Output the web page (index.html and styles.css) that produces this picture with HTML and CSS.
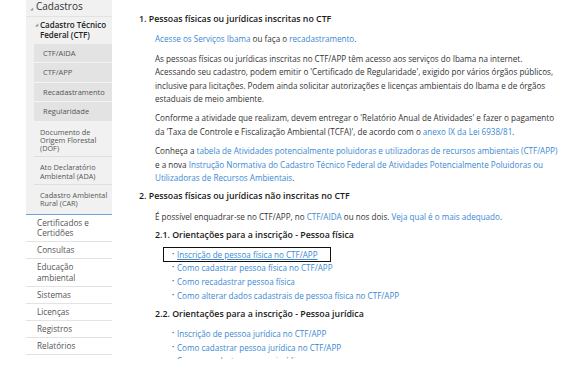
FILE: index.html
```html
<!DOCTYPE html>
<html lang="pt-BR">
<head>
    <meta charset="UTF-8">
    <title>Cadastro Técnico Federal (CTF)</title>
    <link rel="stylesheet" href="styles.css">
</head>
<body>
    <div class="page">
        <nav class="sidebar">
            <div class="menu-top"><span class="tri">◢</span>Cadastros</div>
            <div class="menu-ctf"><span class="tri">◢</span><span>Cadastro Técnico Federal (CTF)</span></div>
            <ul class="menu-sub">
                <li>CTF/AIDA</li>
                <li>CTF/APP</li>
                <li>Recadastramento</li>
                <li>Regularidade</li>
            </ul>
            <ul class="menu-second">
                <li>Documento de Origem Florestal (DOF)</li>
                <li>Ato Declaratório Ambiental (ADA)</li>
                <li>Cadastro Ambiental Rural (CAR)</li>
            </ul>
            <ul class="menu-main">
                <li>Certificados e Certidões</li>
                <li>Consultas</li>
                <li>Educação ambiental</li>
                <li>Sistemas</li>
                <li>Licenças</li>
                <li>Registros</li>
                <li>Relatórios</li>
            </ul>
        </nav>
        <main class="content">
            <h2>1. Pessoas físicas ou jurídicas inscritas no CTF</h2>
            <div class="section">
                <p><a href="#">Acesse os Serviços Ibama</a> ou faça o <a href="#">recadastramento</a>.</p>
                <p>As pessoas físicas ou jurídicas inscritas no CTF/APP têm acesso aos serviços do Ibama na internet. Acessando seu cadastro, podem emitir o 'Certificado de Regularidade', exigido por vários órgãos públicos, inclusive para licitações. Podem ainda solicitar autorizações e licenças ambientais do Ibama e de órgãos estaduais de meio ambiente.</p>
                <p>Conforme a atividade que realizam, devem entregar o 'Relatório Anual de Atividades' e fazer o pagamento da 'Taxa de Controle e Fiscalização Ambiental (TCFA)', de acordo com o <a href="#">anexo IX da Lei 6938/81</a>.</p>
                <p>Conheça a <a href="#">tabela de Atividades potencialmente poluidoras e utilizadoras de recursos ambientais (CTF/APP)</a> e a nova <a href="#">Instrução Normativa do Cadastro Técnico Federal de Atividades Potencialmente Poluidoras ou Utilizadoras de Recursos Ambientais</a>.</p>
            </div>
            <h2>2. Pessoas físicas ou jurídicas não inscritas no CTF</h2>
            <div class="section">
                <p>É possível enquadrar-se no CTF/APP, no <a href="#">CTF/AIDA</a> ou nos dois. <a href="#">Veja qual é o mais adequado</a>.</p>
                <h3>2.1. Orientações para a inscrição - Pessoa física</h3>
                <ul class="links">
                    <li class="focused"><a href="#" class="underline">Inscrição de pessoa física no CTF/APP</a></li>
                    <li><a href="#">Como cadastrar pessoa física no CTF/APP</a></li>
                    <li><a href="#">Como recadastrar pessoa física</a></li>
                    <li><a href="#">Como alterar dados cadastrais de pessoa física no CTF/APP</a></li>
                </ul>
                <h3>2.2. Orientações para a inscrição - Pessoa jurídica</h3>
                <ul class="links">
                    <li><a href="#">Inscrição de pessoa jurídica no CTF/APP</a></li>
                    <li><a href="#">Como cadastrar pessoa jurídica no CTF/APP</a></li>
                    <li><a href="#">Como recadastrar pessoa jurídica</a></li>
                    <li><a href="#">Como alterar dados cadastrais de pessoa jurídica no CTF/APP</a></li>
                </ul>
            </div>
        </main>
    </div>
</body>
</html>
```

FILE: styles.css
```css
body {
    margin: 0;
    background-color: #fff;
    font-family: 'Open Sans', 'Liberation Sans', Arial, sans-serif;
    color: #333;
}
.page {
    display: flex;
    align-items: flex-start;
}
.sidebar {
    width: 86px;
    margin-left: 26px;
    flex-shrink: 0;
}
.sidebar ul {
    list-style: none;
    margin: 0;
    padding: 0;
}
.tri {
    font-size: 4px;
    color: #999;
    margin-right: 3px;
}
.menu-top {
    background-color: #f1f1f1;
    font-size: 10px;
    color: #333;
    height: 16px;
    line-height: 13px;
    padding-left: 4px;
    border-bottom: 1px solid #e2e2e2;
}
.menu-ctf {
    background-color: #f1f1f1;
    display: flex;
    align-items: flex-start;
    padding: 3px 0 4px 9px;
    font-size: 8px;
    font-weight: 600;
    line-height: 10px;
    color: #222;
}
.menu-ctf .tri {
    line-height: 9px;
    margin-right: 2px;
}
.menu-sub {
    background-color: #f1f1f1;
    padding-left: 8px !important;
}
.menu-sub li {
    background-color: #e3e3e3;
    border-bottom: 1px solid #f3f3f3;
    height: 18.4px;
    line-height: 18px;
    padding-left: 9px;
    font-size: 7.5px;
    color: #555;
}
.menu-second {
    background-color: #f1f1f1;
    padding-left: 8px !important;
}
.menu-second li {
    border-bottom: 1px solid #dedede;
    padding: 6px 0 4px 6px;
    font-size: 7.3px;
    line-height: 8.3px;
    color: #555;
}
.menu-second li:last-child {
    border-bottom: none;
    padding-bottom: 6px;
}
.menu-main {
    border-top: 1px solid #6fa3d8;
}
.menu-main li {
    border-bottom: 1px solid #e3e3e3;
    padding: 3px 2px 2.5px 11px;
    font-size: 8.2px;
    line-height: 10.5px;
    color: #555;
}
.content {
    margin-left: 27px;
    width: 423px;
    height: 359px;
    overflow: hidden;
    font-size: 8.1px;
    line-height: 13.4px;
}
.content h2 {
    font-size: 8.8px;
    font-weight: 600;
    color: #1a1a1a;
    margin: 6px 0 6px;
    line-height: 13.4px;
}
.content h2:first-child {
    margin-top: 13px;
}
.section {
    padding-left: 16px;
}
.content p {
    margin: 0 0 6px;
}
.content a {
    color: #3a88d2;
    text-decoration: none;
}
.content a.underline {
    text-decoration: underline;
}
.content h3 {
    font-size: 8.8px;
    font-weight: 600;
    color: #1a1a1a;
    margin: 6px 0 5px;
    line-height: 13.4px;
}
.links {
    list-style: none;
    margin: 0 0 4px;
    padding: 0 0 0 9px;
}
.links li {
    line-height: 13.7px;
    height: 13.7px;
    padding-left: 13px;
    position: relative;
}
.links li::before {
    content: "•";
    color: #555;
    position: absolute;
    left: 8px;
    top: 0;
    font-size: 6px;
    line-height: 13.7px;
}
.links li.focused {
    outline: 1px solid #111;
    outline-offset: 0;
    width: 166px;
    box-sizing: border-box;
}
```
